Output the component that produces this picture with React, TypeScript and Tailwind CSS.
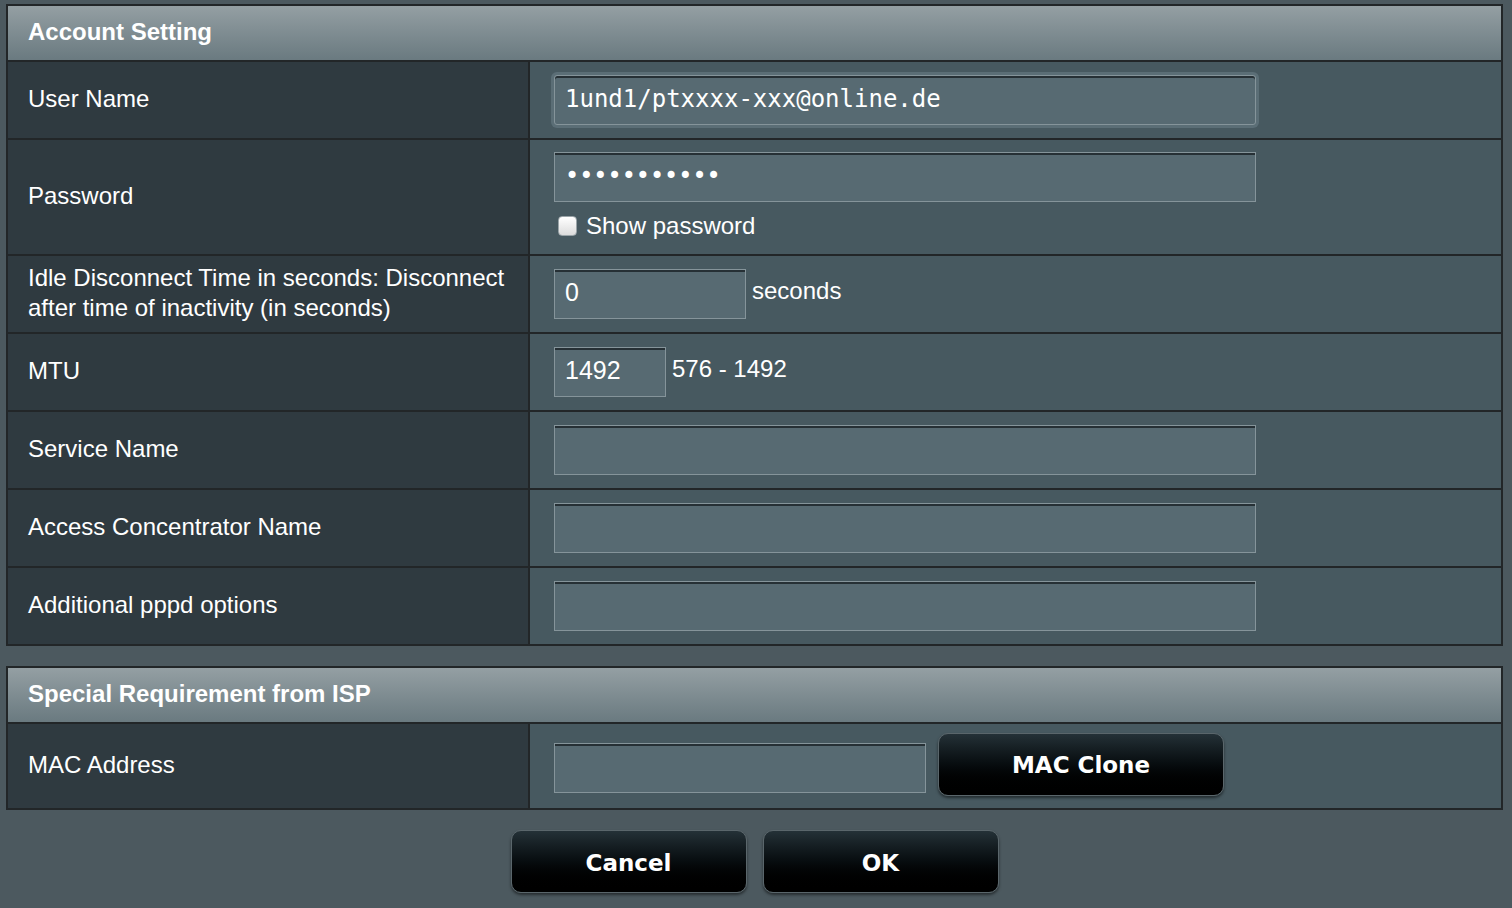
import React from "react";

const sans = { fontFamily: '"Liberation Sans", Arial, Helvetica, sans-serif' };

function Input({ w, value, mono, focus }: { w: string; value?: string; mono?: boolean; focus?: boolean }) {
  return (
    <div
      className={`${w} h-[50px] bg-[#576a72] border border-[#85949a] shadow-[inset_0_2px_0_#263035] flex items-center pl-[10px] pb-[3px] text-white ${
        focus ? "ring-[3px] ring-[#5b6e76] rounded-[3px]" : ""
      }`}
    >
      {value !== undefined && (
        <span
          className={mono ? "text-[24px] leading-none" : "text-[25px] leading-none"}
          style={mono ? { fontFamily: '"DejaVu Sans Mono", monospace' } : sans}
        >
          {value}
        </span>
      )}
    </div>
  );
}

function Row({ label, h, children, top }: { label: React.ReactNode; h: string; children: React.ReactNode; top?: boolean }) {
  return (
    <div className={`flex ${h} border-t-2 border-[#222628]`}>
      <div className="w-[522px] shrink-0 bg-[#2f3a40] border-r-2 border-[#222628] flex items-center pl-[20px] pr-[10px] pb-[3px] text-white text-[24px] leading-[30px]">
        {label}
      </div>
      <div className={`flex-1 bg-[#475960] flex pl-[24px] ${top ? "items-start pt-[12px]" : "items-center"}`}>{children}</div>
    </div>
  );
}

function Header({ title }: { title: string }) {
  return (
    <div className="h-[54px] bg-gradient-to-b from-[#949fa3] to-[#6a7a80] flex items-center pl-[20px] pb-[3px] text-white font-bold text-[24px]">
      {title}
    </div>
  );
}

function Btn({ w, label }: { w: string; label: string }) {
  return (
    <div
      className={`${w} h-[63px] rounded-[10px] border border-[#5a666b] bg-gradient-to-b from-[#243137] to-[#000000] shadow-[0_2px_3px_rgba(0,0,0,0.5)] flex items-center justify-center pt-[3px] text-white font-bold text-[23px]`}
      style={{ fontFamily: '"DejaVu Sans", Verdana, sans-serif' }}
    >
      {label}
    </div>
  );
}

export default function App() {
  return (
    <div className="min-h-[908px] w-[1512px] bg-[#4c595f] pt-[4px] pl-[6px] pr-[9px]" style={sans}>
      <div className="border-2 border-[#222628]">
        <Header title="Account Setting" />
        <Row label="User Name" h="h-[78px]">
          <Input w="w-[702px]" value="1und1/ptxxxx-xxx@online.de" mono focus />
        </Row>
        <Row label="Password" h="h-[116px]" top>
          <div className="flex flex-col">
            <div className="w-[702px] h-[50px] bg-[#576a72] border border-[#85949a] shadow-[inset_0_2px_0_#263035] flex items-center pl-[10px] pb-[2px]">
              <span className="text-white text-[24px] leading-none" style={{ fontFamily: '"DejaVu Sans", sans-serif' }}>
                •••••••••••
              </span>
            </div>
            <div className="flex items-center mt-[12px] ml-[4px]">
              <div className="w-[19px] h-[20px] rounded-[4px] bg-gradient-to-b from-[#ffffff] to-[#dcdcdc] border border-[#9aa4a8]" />
              <span className="ml-[9px] text-white text-[24px] leading-none">Show password</span>
            </div>
          </div>
        </Row>
        <Row
          label={
            <span>
              Idle Disconnect Time in seconds: Disconnect
              <br />
              after time of inactivity (in seconds)
            </span>
          }
          h="h-[78px]"
        >
          <Input w="w-[192px]" value="0" />
          <span className="ml-[6px] mb-[6px] text-white text-[24px]">seconds</span>
        </Row>
        <Row label="MTU" h="h-[78px]">
          <Input w="w-[112px]" value="1492" />
          <span className="ml-[6px] mb-[6px] text-white text-[24px]">576 - 1492</span>
        </Row>
        <Row label="Service Name" h="h-[78px]">
          <Input w="w-[702px]" />
        </Row>
        <Row label="Access Concentrator Name" h="h-[78px]">
          <Input w="w-[702px]" />
        </Row>
        <Row label="Additional pppd options" h="h-[78px]">
          <Input w="w-[702px]" />
        </Row>
      </div>

      <div className="mt-[20px] border-2 border-[#222628]">
        <Header title="Special Requirement from ISP" />
        <Row label="MAC Address" h="h-[86px]">
          <div className="mt-[4px]">
            <Input w="w-[372px]" />
          </div>
          <div className="ml-[12px] mb-[4px]">
            <Btn w="w-[286px]" label="MAC Clone" />
          </div>
        </Row>
      </div>

      <div className="mt-[20px] flex justify-center gap-[16px]">
        <Btn w="w-[236px]" label="Cancel" />
        <Btn w="w-[236px]" label="OK" />
      </div>
    </div>
  );
}
